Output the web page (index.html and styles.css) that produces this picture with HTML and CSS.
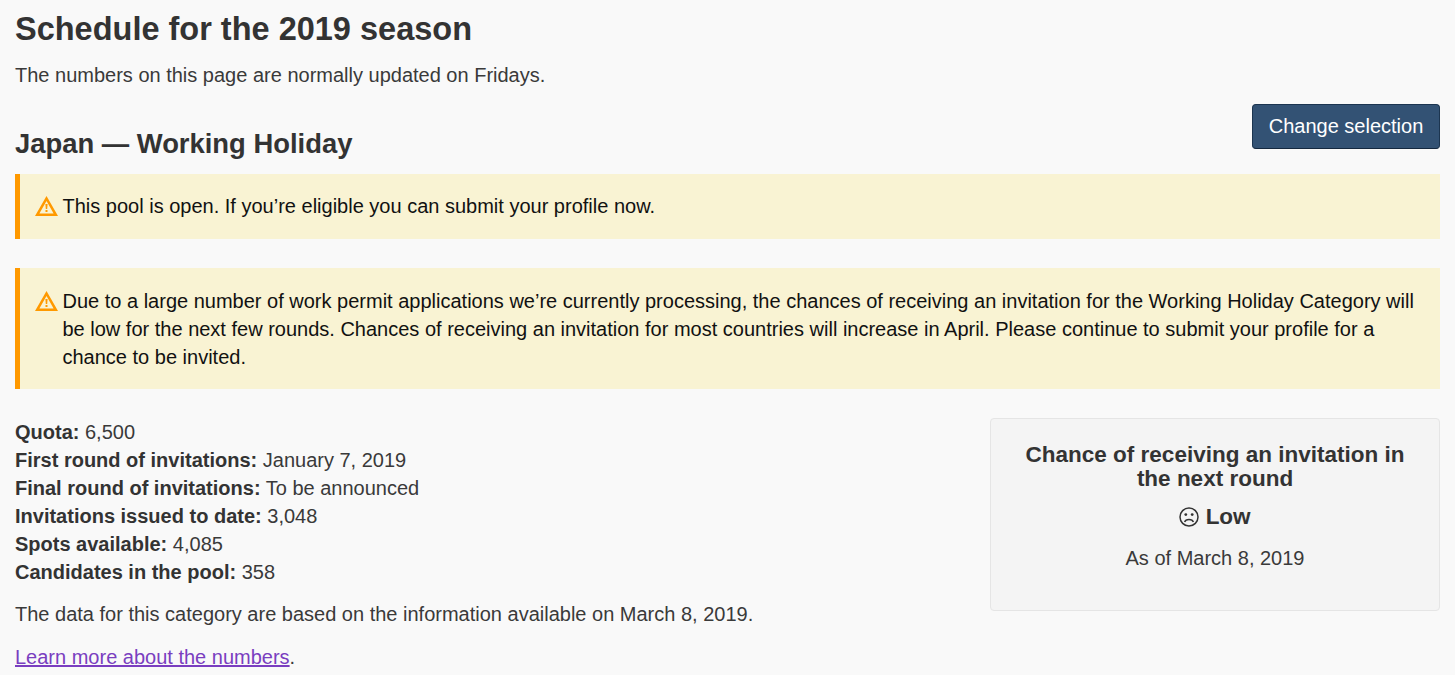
FILE: index.html
```html
<!DOCTYPE html>
<html lang="en">
<head>
<meta charset="utf-8">
<title>Schedule for the 2019 season</title>
<link rel="stylesheet" href="styles.css">
</head>
<body>
<main class="page">
  <h1 class="title">Schedule for the 2019 season</h1>
  <p class="lead">The numbers on this page are normally updated on Fridays.</p>
  <div class="head-row">
    <h2 class="subtitle">Japan — Working Holiday</h2>
    <button class="btn" type="button">Change selection</button>
  </div>
  <div class="alert alert-short">
    <svg class="warn" viewBox="0 0 23 20"><path fill-rule="evenodd" fill="#f90" d="M11.5 0 L23 20 H0 Z M11.5 5 L4.4 17.4 H18.6 Z"/><path fill="#f90" d="M10.4 8h2.2l-.4 5h-1.4zM10.5 14h2v2h-2z"/></svg>
    <span>This pool is open. If you’re eligible you can submit your profile now.</span>
  </div>
  <div class="alert">
    <svg class="warn" viewBox="0 0 23 20"><path fill-rule="evenodd" fill="#f90" d="M11.5 0 L23 20 H0 Z M11.5 5 L4.4 17.4 H18.6 Z"/><path fill="#f90" d="M10.4 8h2.2l-.4 5h-1.4zM10.5 14h2v2h-2z"/></svg>
    <span>Due to a large number of work permit applications we’re currently processing, the chances of receiving an invitation for the Working Holiday Category will be low for the next few rounds. Chances of receiving an invitation for most countries will increase in April. Please continue to submit your profile for a chance to be invited.</span>
  </div>
  <div class="details">
    <div class="facts">
      <ul class="stats">
        <li><b>Quota:</b> 6,500</li>
        <li><b>First round of invitations:</b> January 7, 2019</li>
        <li><b>Final round of invitations:</b> To be announced</li>
        <li><b>Invitations issued to date:</b> 3,048</li>
        <li><b>Spots available:</b> 4,085</li>
        <li><b>Candidates in the pool:</b> 358</li>
      </ul>
      <p class="note">The data for this category are based on the information available on March 8, 2019.</p>
      <p class="note"><a href="#">Learn more about the numbers</a>.</p>
    </div>
    <aside class="chance">
      <h3>Chance of receiving an invitation in the next round</h3>
      <div class="level"><svg class="face" viewBox="0 0 20 20"><circle cx="10" cy="10" r="9" fill="none" stroke="#333" stroke-width="1.5"/><circle cx="6.8" cy="7.6" r="1.4" fill="#333"/><circle cx="13.2" cy="7.6" r="1.4" fill="#333"/><path d="M5.6 15c1.2-3.4 7.6-3.4 8.8 0" fill="none" stroke="#333" stroke-width="1.5"/></svg> <b>Low</b></div>
      <p>As of March 8, 2019</p>
    </aside>
  </div>
</main>
</body>
</html>
```
FILE: styles.css
```css
* { box-sizing: border-box; }
html, body { margin: 0; height: 100%; overflow: hidden; }
body { background: #f9f9f9; color: #3a3a3a; font-family: "Liberation Sans", Arial, sans-serif; font-size: 20px; line-height: 28px; }
b { color: #333; }
.page { padding: 0 15px; }
.title { font-size: 32.5px; line-height: 35px; font-weight: 700; color: #333; margin: 0; padding-top: 12px; }
.lead { margin: 14px 0 0; }
.head-row { display: flex; justify-content: space-between; align-items: flex-start; margin-top: 15px; height: 70px; }
.subtitle { font-size: 27.4px; line-height: 30px; margin: 25px 0 0; font-weight: 700; color: #333; }
.btn { background: #335274; color: #fff; border: 1px solid #1c3550; border-bottom-color: #14283f; border-radius: 4px; font: inherit; white-space: nowrap; height: 45px; width: 188px; padding: 0 0 2px; }
.alert { display: flex; align-items: flex-start; gap: 4.5px; background: #f9f3d3; border-left: 5px solid #f90; color: #111; padding: 19px 16px 18px 15px; margin-bottom: 29px; }
.alert-short { padding: 18px 16px 19px 15px; }
.warn { flex: none; width: 23px; height: 20px; margin-top: 4px; }
.details { display: flex; justify-content: space-between; align-items: flex-start; }
.facts { flex: 1; }
.stats { list-style: none; margin: 0; padding: 0; }
.note { margin: 14px 0 0; }
.note + .note { margin-top: 15px; }
a { color: #7a3ec0; }
.chance { width: 450px; height: 193px; background: #f4f4f4; border: 1px solid #e5e5e5; border-radius: 4px; text-align: center; padding: 24px 30px; color: #3a3a3a; }
.chance h3 { font-size: 22.5px; line-height: 24px; margin: 0; color: #333; }
.level { font-size: 22.5px; margin-top: 12px; }
.face { width: 20px; height: 20px; vertical-align: -3px; }
.chance p { margin: 13px 0 0; }
```
